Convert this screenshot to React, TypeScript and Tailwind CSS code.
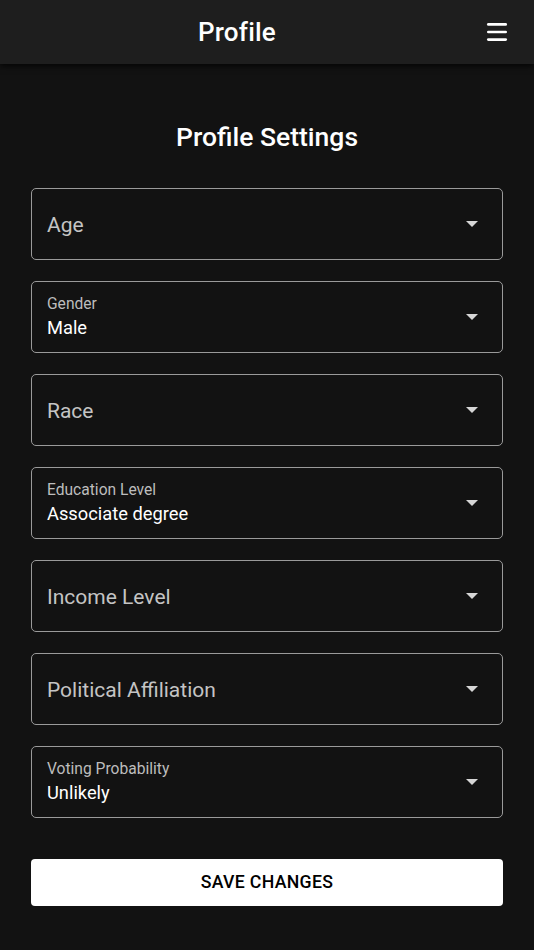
import { Menu } from "lucide-react";

const fields = [
  { label: "Age", value: "" },
  { label: "Gender", value: "Male" },
  { label: "Race", value: "" },
  { label: "Education Level", value: "Associate degree" },
  { label: "Income Level", value: "" },
  { label: "Political Affiliation", value: "" },
  { label: "Voting Probability", value: "Unlikely" },
];

function Arrow() {
  return (
    <svg width="12" height="6" viewBox="0 0 12 6" className="shrink-0">
      <path d="M0 0 L12 0 L6 6 Z" fill="#d6d6d6" />
    </svg>
  );
}

function SelectField({ label, value }: { label: string; value: string }) {
  return (
    <div className="h-[72px] border border-[#9a9a9a] rounded-[5px] flex items-center pl-[15px] pr-[24px]">
      <div className="flex-1 flex flex-col justify-center pt-[1px]">
        {value ? (
          <>
            <span className="text-[15.6px] leading-[20px] text-[#bdbdbd]">{label}</span>
            <span className="text-[18.3px] leading-[26px] text-white mt-[1px]">{value}</span>
          </>
        ) : (
          <span className="text-[21px] leading-[28px] text-[#c4c4c4]">{label}</span>
        )}
      </div>
      <Arrow />
    </div>
  );
}

export default function App() {
  return (
    <div className="min-h-[950px] bg-[#121212] text-white" style={{ fontFamily: "Roboto, 'Noto Sans', sans-serif" }}>
      <header className="h-[64px] bg-[#1e1e1e] flex items-center shadow-[0_2px_6px_rgba(0,0,0,0.8)]">
        <h1 className="flex-1 text-center text-[26px] font-medium tracking-[0.2px]">Profile</h1>
        <button className="w-[60px] h-[64px] flex items-center justify-start pl-[10px] text-white">
          <Menu className="w-[26px] h-[26px]" strokeWidth={2.5} />
        </button>
      </header>
      <main className="px-[31px] pt-[57px]">
        <h2 className="text-center text-[26.5px] font-medium leading-[32px]">Profile Settings</h2>
        <div className="mt-[35px] flex flex-col gap-[21px]">
          {fields.map((f) => (
            <SelectField key={f.label} label={f.label} value={f.value} />
          ))}
        </div>
        <button className="mt-[41px] w-full h-[47px] bg-white rounded-[4px] text-black text-[17.7px] font-medium tracking-[0.3px]">
          SAVE CHANGES
        </button>
      </main>
    </div>
  );
}
